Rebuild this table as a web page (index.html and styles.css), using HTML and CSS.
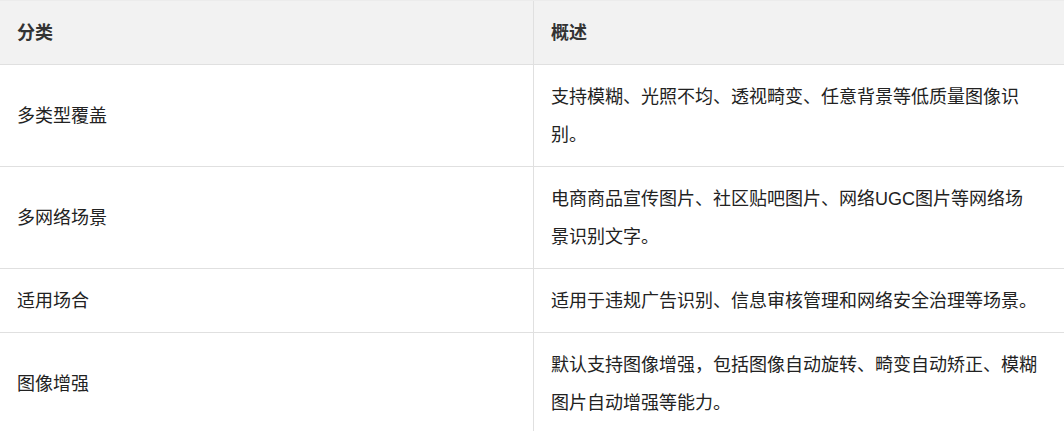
FILE: index.html
```html
<!DOCTYPE html>
<html lang="zh-CN">
<head>
<meta charset="utf-8">
<title>表格</title>
<link rel="stylesheet" href="styles.css">
</head>
<body>
<div class="table">
  <div class="cell head">分类</div>
  <div class="cell head desc">概述</div>

  <div class="cell">多类型覆盖</div>
  <div class="cell desc">支持模糊、光照不均、透视畸变、任意背景等低质量图像识别。</div>

  <div class="cell">多网络场景</div>
  <div class="cell desc">电商商品宣传图片、社区贴吧图片、网络UGC图片等网络场景识别文字。</div>

  <div class="cell">适用场合</div>
  <div class="cell desc">适用于违规广告识别、信息审核管理和网络安全治理等场景。</div>

  <div class="cell">图像增强</div>
  <div class="cell desc">默认支持图像增强，包括图像自动旋转、畸变自动矫正、模糊图片自动增强等能力。</div>
</div>
</body>
</html>
```

FILE: styles.css
```css
html, body {
  margin: 0;
  padding: 0;
  background: #ffffff;
}

body {
  font-family: "Liberation Sans", "Noto Sans CJK SC", sans-serif;
  font-size: 18px;
  line-height: 38px;
  color: #222222;
}

.table {
  display: grid;
  grid-template-columns: 533px 1fr;
  width: 1064px;
  border-top: 1px solid #ececec;
}

.cell {
  display: flex;
  align-items: center;
  padding: 12.5px 17px;
  border-bottom: 1px solid #e0e0e0;
  min-width: 0;
}

.desc {
  border-left: 1px solid #e0e0e0;
  padding-right: 25px;
}

.head {
  background: #f2f2f2;
  font-weight: bold;
  color: #333333;
}
```
